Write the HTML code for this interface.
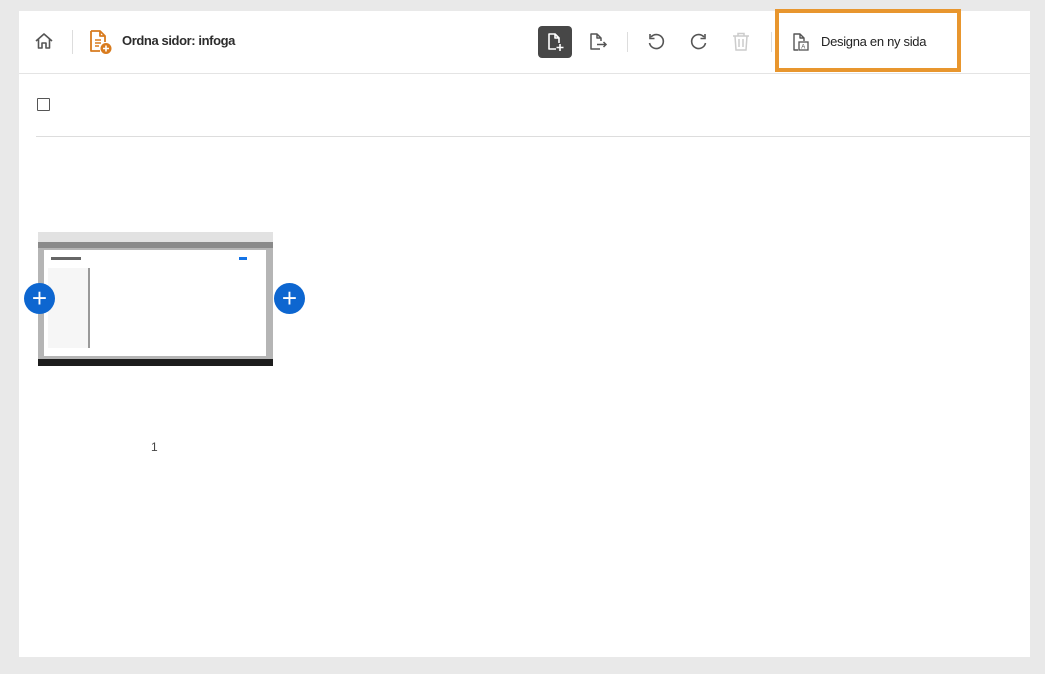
<!DOCTYPE html>
<html><head><style>
body{margin:0;width:1045px;height:674px;background:#e9e9e9;font-family:"Liberation Sans",sans-serif;position:relative;overflow:hidden}
.p{position:absolute;left:19px;top:11px;width:1011px;height:646px;background:#fff}
.a{position:absolute}
</style></head><body>
<div class="p"></div>
<div class="a" style="left:19px;top:73px;width:1011px;height:1px;background:#e4e4e4"></div>
<svg class="a" style="left:34px;top:32px" width="20" height="18" viewBox="0 0 20 18"><path d="M2 9 L10 2 L18 9 M4.5 7 V16 H8 V11 H12 V16 H15.5 V7" fill="none" stroke="#555" stroke-width="1.6" stroke-linejoin="round"/></svg>
<div class="a" style="left:72px;top:30px;width:1px;height:24px;background:#ddd"></div>
<svg class="a" style="left:89px;top:29px" width="24" height="26" viewBox="0 0 24 26"><path d="M2 2 H11 L16 7 V13 M11 2 V7 H16 M2 2 V22 H11" fill="none" stroke="#d87b1e" stroke-width="1.8" stroke-linejoin="round"/><path d="M6 11H12M6 14H12M6 17H10" stroke="#d87b1e" stroke-width="1.5"/><circle cx="17" cy="19.5" r="5.5" fill="#d87b1e"/><path d="M17 16.5V22.5M14 19.5H20" stroke="#fff" stroke-width="1.6"/></svg>
<div class="a" style="left:122px;top:33px;font-size:13px;letter-spacing:-0.4px;font-weight:bold;color:#2c2c2c">Ordna sidor: infoga</div>
<div class="a" style="left:538px;top:26px;width:34px;height:32px;background:#474747;border-radius:4px"></div>
<svg class="a" style="left:545px;top:31px" width="20" height="22" viewBox="0 0 20 22"><path d="M11 18 H4 V3 H10 L14 7 V12 M10 3 V7 H14" fill="none" stroke="#fff" stroke-width="1.6" stroke-linejoin="round"/><path d="M15 13V20M11.5 16.5H18.5" stroke="#fff" stroke-width="1.6"/></svg>
<svg class="a" style="left:588px;top:31px" width="22" height="22" viewBox="0 0 22 22"><path d="M12 18 H3 V3 H9 L13 7 V10 M9 3 V7 H13" fill="none" stroke="#555" stroke-width="1.5" stroke-linejoin="round"/><path d="M9 13.5H18M15.5 11L18 13.5L15.5 16" fill="none" stroke="#555" stroke-width="1.5"/></svg>
<div class="a" style="left:627px;top:32px;width:1px;height:20px;background:#ddd"></div>
<svg class="a" style="left:646px;top:32px" width="20" height="20" viewBox="0 0 20 20"><path d="M5 5 A7 7 0 1 1 3.5 11" fill="none" stroke="#555" stroke-width="1.6"/><path d="M4 2V6.5H8.5" fill="none" stroke="#555" stroke-width="1.6"/></svg>
<svg class="a" style="left:689px;top:32px" width="20" height="20" viewBox="0 0 20 20"><path d="M15 5 A7 7 0 1 0 16.5 11" fill="none" stroke="#555" stroke-width="1.6"/><path d="M16 2V6.5H11.5" fill="none" stroke="#555" stroke-width="1.6"/></svg>
<svg class="a" style="left:731px;top:31px" width="20" height="22" viewBox="0 0 20 22"><path d="M2 5H18M7 5V2.5H13V5M4 5L5 19H15L16 5M8 8V16M12 8V16" fill="none" stroke="#ccc" stroke-width="1.5"/></svg>
<div class="a" style="left:771px;top:32px;width:1px;height:20px;background:#ddd"></div>
<div class="a" style="left:775px;top:9px;width:178px;height:55px;border:4px solid #e8962e"></div>
<svg class="a" style="left:791px;top:31px" width="20" height="22" viewBox="0 0 20 22"><path d="M7 19 H3 V3 H9 L13 7 V10 M9 3 V7 H13" fill="none" stroke="#555" stroke-width="1.4" stroke-linejoin="round"/><rect x="8" y="11" width="9" height="8" fill="none" stroke="#555" stroke-width="1.3"/><text x="10.2" y="17.5" font-size="6" fill="#555" font-family="Liberation Sans">A</text></svg>
<div class="a" style="left:821px;top:34px;font-size:13px;letter-spacing:-0.3px;color:#222">Designa en ny sida</div>
<div class="a" style="left:37px;top:98px;width:11px;height:11px;border:1.5px solid #555;border-radius:1px"></div>
<div class="a" style="left:36px;top:136px;width:994px;height:1px;background:#ddd"></div>
<div class="a" style="left:38px;top:232px;width:235px;height:134px;background:#b5b5b5"></div>
<div class="a" style="left:38px;top:232px;width:235px;height:10px;background:#e2e2e2"></div>
<div class="a" style="left:38px;top:242px;width:235px;height:6px;background:#8a8a8a"></div>
<div class="a" style="left:44px;top:250px;width:222px;height:106px;background:#fff"></div>
<div class="a" style="left:48px;top:268px;width:40px;height:80px;background:#f6f6f6;border-right:2px solid #999"></div>
<div class="a" style="left:51px;top:257px;width:30px;height:3px;background:#666"></div>
<div class="a" style="left:239px;top:257px;width:8px;height:3px;background:#1473e6"></div>
<div class="a" style="left:38px;top:359px;width:235px;height:7px;background:#1d1d1d"></div>
<div class="a" style="left:24px;top:283px;width:31px;height:31px;border-radius:50%;background:#0d66d0;color:#fff;font-size:26px;line-height:30px;text-align:center">+</div>
<div class="a" style="left:274px;top:283px;width:31px;height:31px;border-radius:50%;background:#0d66d0;color:#fff;font-size:26px;line-height:30px;text-align:center">+</div>
<div class="a" style="left:151px;top:440px;font-size:12px;color:#444">1</div>
</body></html>
